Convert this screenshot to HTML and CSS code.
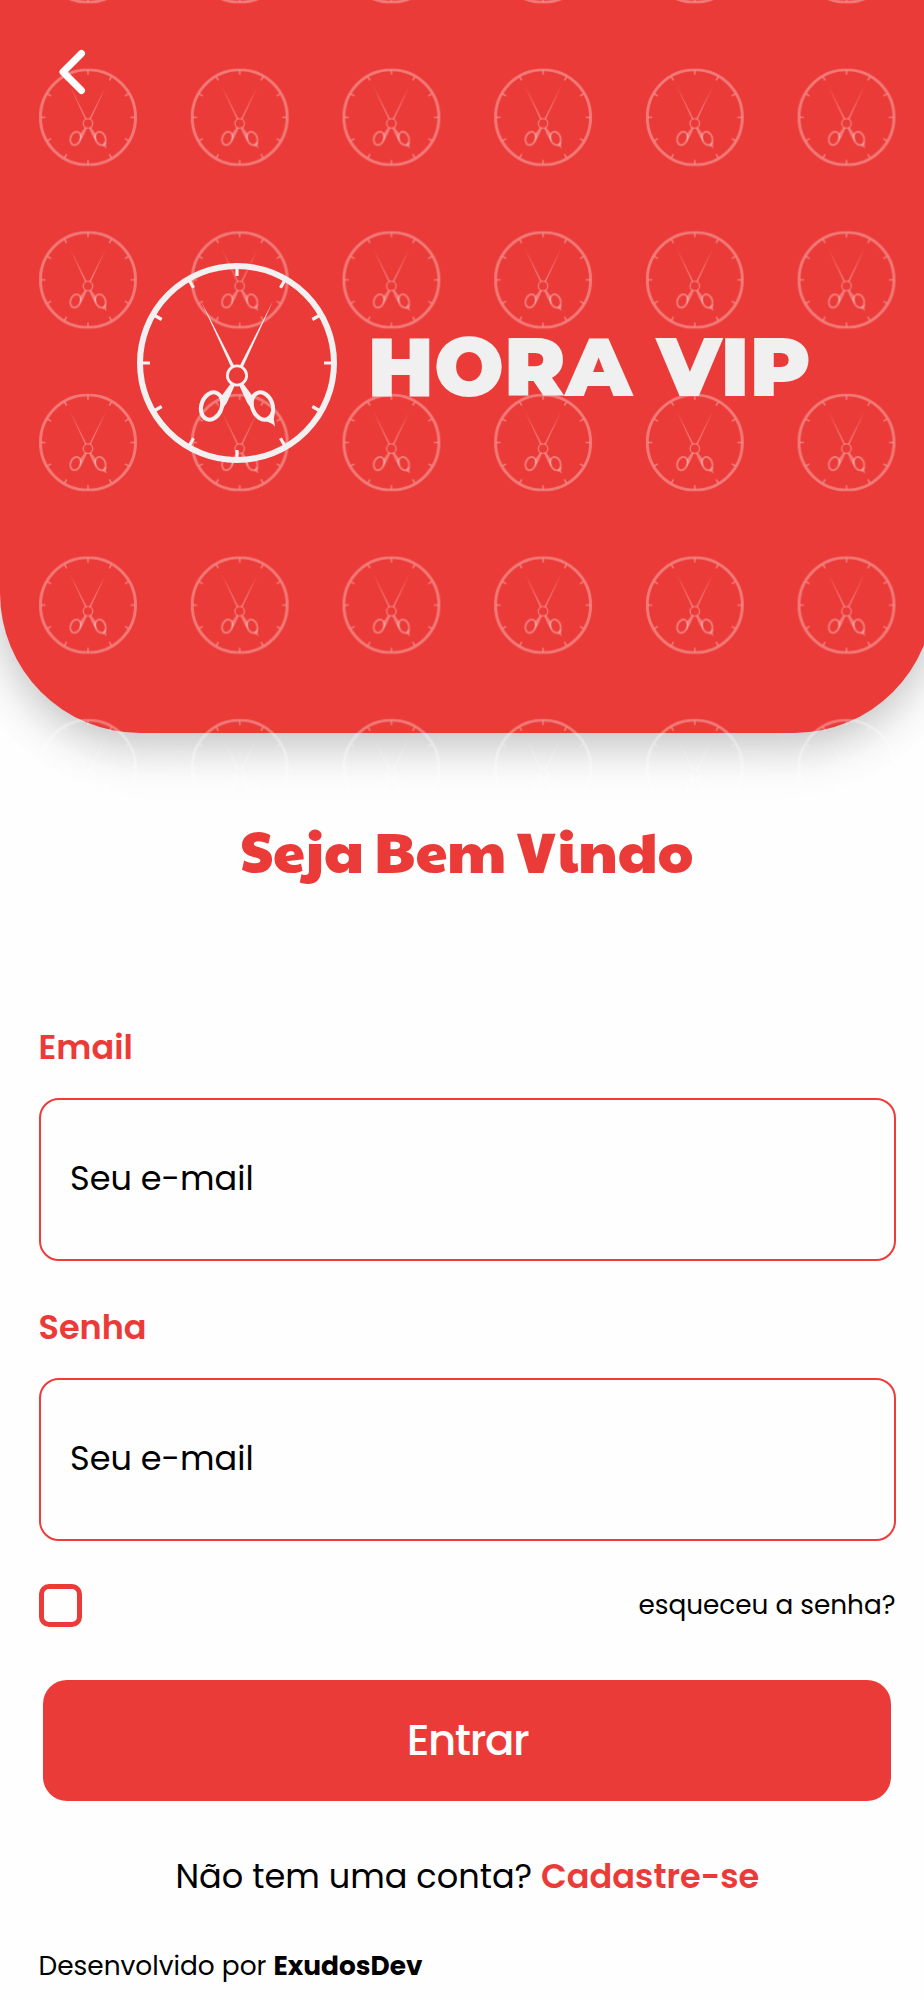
FILE: index.html
```html
<!DOCTYPE html>
<html lang="pt-BR">
<head>
    <meta charset="UTF-8">
    <meta name="viewport" content="width=device-width, initial-scale=1.0">
    <title>Hora VIP</title>
    <link rel="stylesheet" href="styles.css">
</head>
<body>

<header class="hero">
    <svg class="hero-pattern" width="924" height="860">
        <defs>
            <symbol id="clock" viewBox="0 0 200 200">
                <g fill="none" stroke="currentColor">
                    <circle cx="100" cy="100" r="97" stroke-width="6"/>
                    <path stroke-width="3.2" d="M100 5v8M100 187v8M5 100h8M187 100h8M52.5 17.7l4 7M147.5 17.7l-4 7M52.5 182.3l4-7M147.5 182.3l-4-7M17.7 52.5l7 4M182.3 52.5l-7 4M17.7 147.5l7-4M182.3 147.5l-7-4"/>
                    <circle cx="100" cy="112.5" r="9.6" stroke-width="2.8"/>
                    <ellipse cx="74.6" cy="143" rx="10.2" ry="14" stroke-width="4" transform="rotate(20 74.6 143)"/>
                    <ellipse cx="125.4" cy="143" rx="10.2" ry="14" stroke-width="4" transform="rotate(-20 125.4 143)"/>
                </g>
                <g fill="currentColor">
                    <path d="M94.2 104.2L64 38l33.2 64.8z"/>
                    <path d="M105.8 104.2L136 38l-33.2 64.8z"/>
                    <path d="M93.8 120.5l3.8 2.3L90 139.5l-7.5 11 2-17.5z"/>
                    <path d="M106.2 120.5l-3.8 2.3L110 139.5l7.5 11-2-17.5z"/>
                    <path d="M138 149l-1.2 7 1.2 7.5c-3-3.5-6-4.5-9.5-5z"/>
                </g>
            </symbol>
            <pattern id="clocks" x="12.2" y="36" width="151.7" height="162.6" patternUnits="userSpaceOnUse">
                <use href="#clock" x="26.8" y="32.3" width="98" height="98"/>
            </pattern>
        </defs>
        <rect width="924" height="860" fill="url(#clocks)"/>
    </svg>
    <a class="back" href="#" aria-label="Voltar">
        <svg width="28" height="48" viewBox="0 0 28 48">
            <path d="M23.5 5.5L5 24l18.5 18.5" fill="none" stroke="#fff" stroke-width="7" stroke-linecap="round" stroke-linejoin="round"/>
        </svg>
    </a>
    <div class="logo">
        <svg class="logo-icon" width="200" height="200"><use href="#clock"/></svg>
        <span class="logo-text">HORA VIP</span>
    </div>
</header>

<main class="content">
    <h1 class="title">Seja Bem Vindo</h1>
    <form class="login-form">
        <label class="label-email" for="email">Email</label>
        <input class="field" type="text" id="email" placeholder="Seu e-mail">

        <label class="label-senha" for="senha">Senha</label>
        <input class="field" type="text" id="senha" placeholder="Seu e-mail">

        <div class="options">
            <input class="check" type="checkbox" aria-label="Lembrar">
            <a class="forgot" href="#">esqueceu a senha?</a>
        </div>

        <button class="submit-btn" type="submit">Entrar</button>
    </form>
    <p class="signup">Não tem uma conta? <a href="#">Cadastre-se</a></p>
    <p class="credits">Desenvolvido por <b>ExudosDev</b></p>
</main>

</body>
</html>
```

FILE: styles.css
```css
* {
    margin: 0;
    padding: 0;
    box-sizing: border-box;
}

body {
    width: 924px;
    height: 2000px;
    overflow: hidden;
    background-color: #fefefe;
    color: #000;
    font-family: Poppins, Inter, sans-serif;
}

a {
    color: inherit;
    text-decoration: none;
}

.hero {
    position: relative;
    width: 934px;
    height: 733px;
    padding: 48px 58px 0;
    background-color: #eb3b38;
    border-radius: 0 0 140px 140px;
    box-shadow: 0 12px 45px rgba(0, 0, 0, 0.23), 0 30px 90px rgba(0, 0, 0, 0.02);
}

/* runs past the bottom edge of the hero */
.hero-pattern {
    position: absolute;
    top: 0;
    left: 0;
    color: rgba(255, 255, 255, 0.32);
}

.back,
.back svg {
    display: block;
    height: 48px;
}

.logo {
    position: relative;
    display: flex;
    align-items: center;
    margin: 167px 0 0 79px;
}

.logo-icon {
    color: #f2f0f0;
}

.logo-text {
    margin: 8px 0 0 30.5px;
    font-family: Montserrat, Inter, sans-serif;
    font-size: 82.6px;
    font-weight: 900;
    line-height: 100px;
    color: #f0f0f0;
    white-space: nowrap;
}

.content {
    padding: 81px 28.5px 0 38.5px;
}

.title {
    text-align: center;
    font-family: "Paytone One", Montserrat, sans-serif;
    font-size: 57.4px;
    font-weight: 400;
    line-height: 70px;
    color: #eb3b38;
}

.login-form {
    display: flex;
    flex-direction: column;
    padding-top: 139px;
}

.login-form label {
    height: 50px;
    margin-bottom: 25px;
    font-size: 33.5px;
    font-weight: 600;
    line-height: 50px;
    color: #eb3b38;
}

.login-form .label-senha {
    margin-top: 42px;
}

.field {
    height: 163px;
    padding: 0 29.5px 2px;
    border: 2px solid #ed3c3a;
    border-radius: 20px;
    background-color: transparent;
    font-family: inherit;
    font-size: 33.5px;
    outline: none;
}

.field::placeholder {
    color: #000;
    opacity: 1;
}

.options {
    display: flex;
    justify-content: space-between;
    align-items: center;
    height: 44px;
    margin: 42px 0 53px;
}

.check {
    appearance: none;
    width: 43px;
    height: 43px;
    border: 5px solid #eb3b38;
    border-radius: 10px;
}

.forgot {
    font-size: 26.3px;
}

.submit-btn {
    height: 121px;
    margin: 0 4.5px;
    padding: 0 0 3px 1px;
    border: none;
    border-radius: 24px;
    background-color: #eb3b38;
    color: #fff;
    font-family: inherit;
    font-size: 43.5px;
    font-weight: 500;
    letter-spacing: -1.4px;
    cursor: pointer;
}

.signup {
    margin: 51px 0 0 137px;
    font-size: 33.55px;
    line-height: 50px;
    white-space: nowrap;
}

.signup a {
    font-weight: 600;
    color: #eb3b38;
}

.credits {
    margin-top: 43px;
    font-size: 26.4px;
    line-height: 42px;
}
```
